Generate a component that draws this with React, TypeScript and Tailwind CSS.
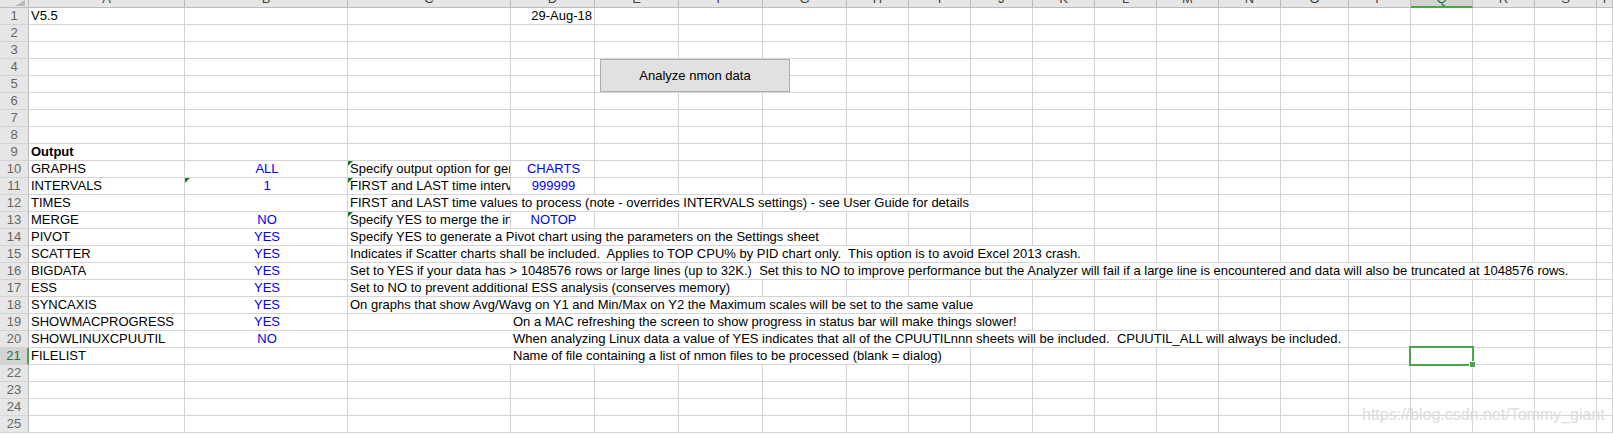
import React from "react";

type Cell = {
  c: number;
  span?: number;
  text: string;
  cls?: string;
  tri?: boolean;
};

const COLS = ["A","B","C","D","E","F","G","H","I","J","K","L","M","N","O","P","Q","R","S","T"];

const SPAN: Record<number, string> = {
  1: "col-span-1 overflow-hidden",
  4: "col-span-4",
  5: "col-span-5",
  7: "col-span-7",
  8: "col-span-8",
  9: "col-span-9",
  13: "col-span-13",
  17: "col-span-17",
};

const BLUE = "text-[#0000ff] text-center";

const DATA: Record<number, Cell[]> = {
  1: [
    { c: 0, text: "V5.5" },
    { c: 3, text: "29-Aug-18", cls: "text-right pr-[2px]" },
  ],
  9: [{ c: 0, text: "Output", cls: "font-bold" }],
  10: [
    { c: 0, text: "GRAPHS" },
    { c: 1, text: "ALL", cls: BLUE },
    { c: 2, text: "Specify output option for generated graphs", tri: true },
    { c: 3, text: "CHARTS", cls: BLUE },
  ],
  11: [
    { c: 0, text: "INTERVALS" },
    { c: 1, text: "1", cls: BLUE, tri: true },
    { c: 2, text: "FIRST and LAST time intervals to process", tri: true },
    { c: 3, text: "999999", cls: BLUE },
  ],
  12: [
    { c: 0, text: "TIMES" },
    { c: 2, span: 8, text: "FIRST and LAST time values to process (note - overrides INTERVALS settings) - see User Guide for details" },
  ],
  13: [
    { c: 0, text: "MERGE" },
    { c: 1, text: "NO", cls: BLUE },
    { c: 2, text: "Specify YES to merge the input files", tri: true },
    { c: 3, text: "NOTOP", cls: BLUE },
  ],
  14: [
    { c: 0, text: "PIVOT" },
    { c: 1, text: "YES", cls: BLUE },
    { c: 2, span: 5, text: "Specify YES to generate a Pivot chart using the parameters on the Settings sheet" },
  ],
  15: [
    { c: 0, text: "SCATTER" },
    { c: 1, text: "YES", cls: BLUE },
    { c: 2, span: 9, text: "Indicates if Scatter charts shall be included.  Applies to TOP CPU% by PID chart only.  This option is to avoid Excel 2013 crash." },
  ],
  16: [
    { c: 0, text: "BIGDATA" },
    { c: 1, text: "YES", cls: BLUE },
    { c: 2, span: 17, text: "Set to YES if your data has > 1048576 rows or large lines (up to 32K.)  Set this to NO to improve performance but the Analyzer will fail if a large line is encountered and data will also be truncated at 1048576 rows." },
  ],
  17: [
    { c: 0, text: "ESS" },
    { c: 1, text: "YES", cls: BLUE },
    { c: 2, span: 4, text: "Set to NO to prevent additional ESS analysis (conserves memory)" },
  ],
  18: [
    { c: 0, text: "SYNCAXIS" },
    { c: 1, text: "YES", cls: BLUE },
    { c: 2, span: 8, text: "On graphs that show Avg/Wavg on Y1 and Min/Max on Y2 the Maximum scales will be set to the same value" },
  ],
  19: [
    { c: 0, text: "SHOWMACPROGRESS" },
    { c: 1, text: "YES", cls: BLUE },
    { c: 2, span: 8, text: "On a MAC refreshing the screen to show progress in status bar will make things slower!", cls: "pl-[165px]" },
  ],
  20: [
    { c: 0, text: "SHOWLINUXCPUUTIL" },
    { c: 1, text: "NO", cls: BLUE },
    { c: 2, span: 13, text: "When analyzing Linux data a value of YES indicates that all of the CPUUTILnnn sheets will be included.  CPUUTIL_ALL will always be included.", cls: "pl-[165px]" },
  ],
  21: [
    { c: 0, text: "FILELIST" },
    { c: 2, span: 7, text: "Name of file containing a list of nmon files to be processed (blank = dialog)", cls: "pl-[165px]" },
    { c: 16, text: "", cls: "sel" },
  ],
};

function Triangle() {
  return (
    <svg className="absolute left-0 top-0" width="6" height="6" viewBox="0 0 6 6">
      <polygon points="0,0 5,0 0,5" fill="#1f7a1f" />
    </svg>
  );
}

function Row({ r }: { r: number }) {
  const cells = DATA[r] ?? [];
  const out: React.ReactNode[] = [];
  const selRow = r === 21;
  out.push(
    <div
      key="h"
      className={
        "border-b border-b-[#d4d4d4] text-center leading-[16px] " +
        (selRow
          ? "bg-[#d3d3d3] text-[#217346] border-r-2 border-r-[#4ba64b]"
          : "bg-[#e6e6e6] text-[#666666] border-r border-r-[#bcbcbc]")
      }
    >
      {r}
    </div>
  );
  let c = 0;
  while (c < 20) {
    const cell = cells.find((x) => x.c === c);
    if (cell) {
      const span = cell.span ?? 1;
      const isSel = cell.cls === "sel";
      out.push(
        <div
          key={c}
          className={`relative ${isSel ? "col-span-1" : SPAN[span]} border-r border-b border-[#d4d4d4] pl-[2px] leading-[16px] whitespace-pre ${
            isSel ? "" : cell.cls ?? ""
          }`}
        >
          {cell.tri && <Triangle />}
          {cell.text}
          {isSel && (
            <>
              <div className="absolute -left-[2px] -top-[2px] -right-[2px] -bottom-[2px] border-2 border-[#4ba64b]" />
              <div className="absolute -right-[4px] -bottom-[4px] w-[7px] h-[7px] bg-[#4ba64b] border border-white" />
            </>
          )}
        </div>
      );
      c += span;
    } else {
      out.push(<div key={c} className="border-r border-b border-[#d4d4d4]" />);
      c += 1;
    }
  }
  return <>{out}</>;
}

export default function App() {
  const rows = Array.from({ length: 25 }, (_, i) => i + 1);
  return (
    <div
      className="relative w-[1613px] h-[435px] overflow-hidden bg-white text-black text-[13px]"
      style={{ fontFamily: '"Liberation Sans", Arial, sans-serif' }}
    >
      <div className="grid grid-cols-[29px_156px_163px_163px_84px_84px_84px_84px_62px_62px_62px_62px_62px_62px_62px_68px_62px_62px_62px_62px_1fr] grid-rows-[8px_repeat(25,17px)]">
        <div className="relative bg-[#e6e6e6] border-r border-b border-r-[#bcbcbc] border-b-[#bcbcbc]">
          <svg className="absolute right-[3px] bottom-[1px]" width="10" height="6" viewBox="0 0 10 6">
            <polygon points="10,0 10,6 0,6" fill="#b8b8b8" />
          </svg>
        </div>
        {COLS.map((L, i) =>
          i === 16 ? (
            <div
              key={L}
              className="overflow-hidden bg-[#d3d3d3] border-r border-r-[#bcbcbc] border-b-2 border-b-[#4ba64b] text-center text-[#217346]"
            >
              <div className="-mt-[9px] leading-[16px]">{L}</div>
            </div>
          ) : (
            <div
              key={L}
              className="overflow-hidden bg-[#e6e6e6] border-r border-b border-r-[#bcbcbc] border-b-[#bcbcbc] text-center text-[#444444]"
            >
              <div className="-mt-[9px] leading-[16px]">{L}</div>
            </div>
          )
        )}
        {rows.map((r) => (
          <Row key={r} r={r} />
        ))}
      </div>

      {/* Form button floating over the sheet */}
      <div className="absolute left-[600px] top-[59px] w-[190px] h-[33px] bg-[#e1e1e1] border border-[#adadad] flex items-center justify-center text-black">
        Analyze nmon data
      </div>

      {/* Watermark overlay */}
      <div className="absolute left-[1362px] top-[403px] text-[16px] text-[#dcdcdc] pointer-events-none whitespace-nowrap">
        https://blog.csdn.net/Tommy_giant
      </div>
    </div>
  );
}
